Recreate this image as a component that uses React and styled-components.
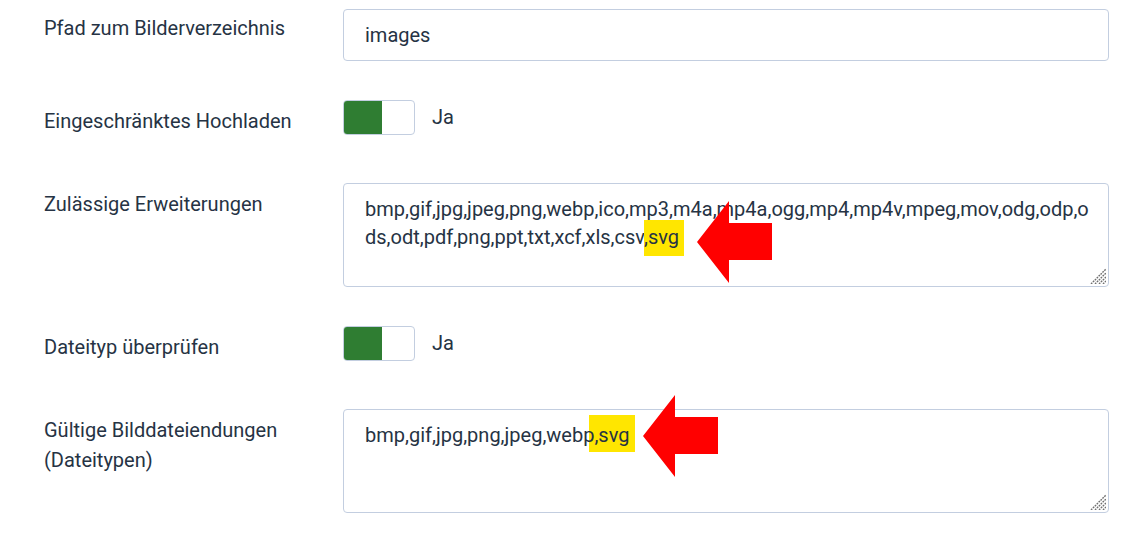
import React from "react";
import styled, { createGlobalStyle } from "styled-components";

const GlobalStyle = createGlobalStyle`
  html, body { margin: 0; padding: 0; background: #ffffff; }
  body {
    font-family: Roboto, "Noto Sans", "Liberation Sans", sans-serif;
    color: #263344;
    -webkit-font-smoothing: antialiased;
  }
`;

const Form = styled.div`
  width: 1142px;
  box-sizing: border-box;
  padding: 9px 33px 0 44px;
  display: flex;
  flex-direction: column;
  gap: 39px;
`;

const Row = styled.div`
  display: grid;
  grid-template-columns: 299px 1fr;
  align-items: start;
`;

const Label = styled.label`
  font-size: 20px;
  line-height: 30px;
  color: #263344;
  padding-top: ${(p) => p.$offset}px;
  padding-right: 12px;
`;

const Field = styled.div`
  position: relative;
  box-sizing: border-box;
  height: ${(p) => p.$height}px;
  border: 1px solid #c3cee0;
  border-radius: 4px;
  background: #fff;
  padding: 11px 14px 11px 21px;
  font-size: 20px;
  line-height: 28px;
  color: #263344;
  word-break: break-all;
  overflow: visible;
`;

const SwitchRow = styled.div`
  height: 44px;
  display: flex;
  align-items: flex-start;
  gap: 17px;
`;

const Switch = styled.div`
  box-sizing: border-box;
  width: 72px;
  height: 35px;
  border: 1px solid #c3cee0;
  border-radius: 4px;
  overflow: hidden;
  display: flex;
  background: #fff;
`;

const SwitchOn = styled.span`
  width: 38px;
  height: 100%;
  background: #2f7d32;
`;

const SwitchText = styled.span`
  font-size: 20px;
  line-height: 35px;
  color: #263344;
`;

const Mark = styled.span`
  background: #ffe600;
  padding: ${(p) => p.$pad};
  margin-left: ${(p) => p.$ml || 0}px;
`;

const OnTop = styled.span`
  position: relative;
  z-index: 1;
`;

const Grip = styled.svg`
  position: absolute;
  right: 2px;
  bottom: 2px;
  width: 17px;
  height: 17px;
`;

const Arrow = styled.svg`
  position: absolute;
  left: ${(p) => p.$x}px;
  top: ${(p) => p.$y}px;
  overflow: visible;
  pointer-events: none;
  z-index: 2;
`;

function ResizeGrip() {
  return (
    <Grip viewBox="0 0 17 17">
      {[3, 7, 11, 15].map((o) => (
        <line
          key={o}
          x1={17 - o}
          y1={17}
          x2={17}
          y2={17 - o}
          stroke="#6f6f6f"
          strokeWidth="1.4"
          strokeDasharray="1.8 0.9"
        />
      ))}
    </Grip>
  );
}

function RedArrow({ x, y }) {
  return (
    <Arrow $x={x} $y={y} width="75" height="82" viewBox="0 0 75 82">
      <polygon
        points="0,41 32,0 32,22 75,22 75,59 32,59 32,82"
        fill="#ff0000"
      />
    </Arrow>
  );
}

export default function App() {
  return (
    <>
      <GlobalStyle />
      <Form>
        <Row>
          <Label $offset={4}>Pfad zum Bilderverzeichnis</Label>
          <Field $height={52}>images</Field>
        </Row>

        <Row>
          <Label $offset={6}>Eingeschränktes Hochladen</Label>
          <SwitchRow>
            <Switch>
              <SwitchOn />
            </Switch>
            <SwitchText>Ja</SwitchText>
          </SwitchRow>
        </Row>

        <Row>
          <Label $offset={6}>Zulässige Erweiterungen</Label>
          <Field $height={104}>
            bmp,gif,jpg,jpeg,png,webp,ico,mp3,m4a,mp4a,ogg,mp4,mp4v,mpeg,mov,odg,odp,ods,odt,pdf,png,ppt,txt,xcf,xls,csv
            <Mark $pad="5px 5px 7px 0">,svg</Mark>
            <ResizeGrip />
            <RedArrow x={353} y={17} />
          </Field>
        </Row>

        <Row>
          <Label $offset={6}>Dateityp überprüfen</Label>
          <SwitchRow>
            <Switch>
              <SwitchOn />
            </Switch>
            <SwitchText>Ja</SwitchText>
          </SwitchRow>
        </Row>

        <Row>
          <Label $offset={6}>Gültige Bilddateiendungen (Dateitypen)</Label>
          <Field $height={104}>
            bmp,gif,jpg,png,jpeg,web<OnTop>p</OnTop>
            <Mark $pad="8px 5px 5px 5px" $ml={-5}>,svg</Mark>
            <ResizeGrip />
            <RedArrow x={299} y={-15} />
          </Field>
        </Row>
      </Form>
    </>
  );
}
